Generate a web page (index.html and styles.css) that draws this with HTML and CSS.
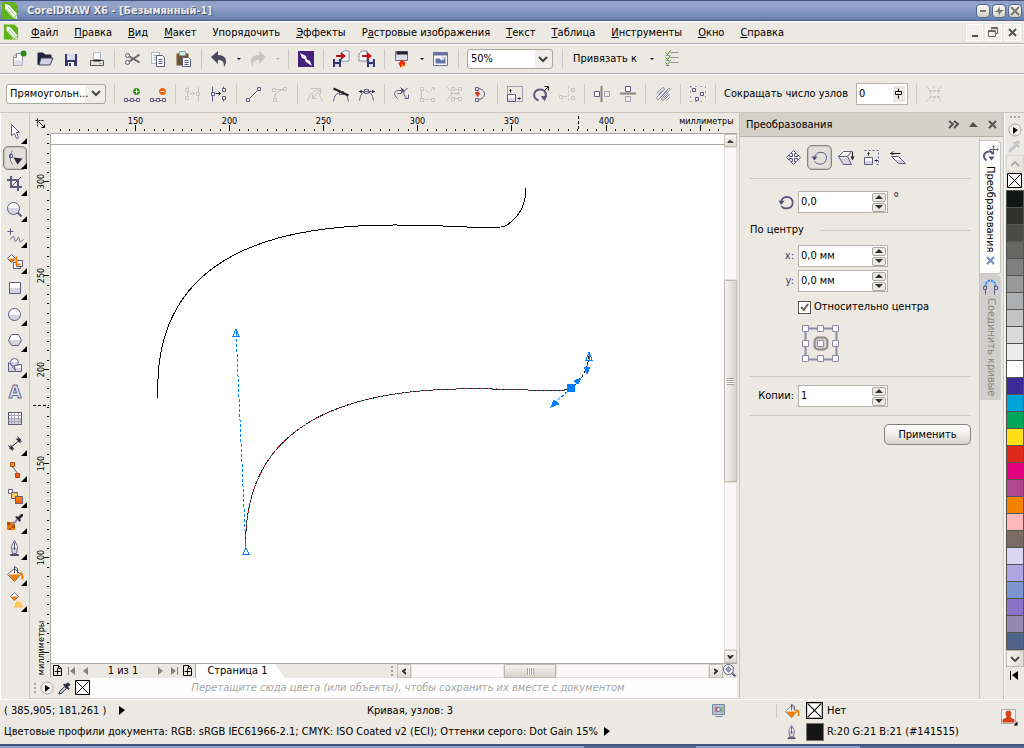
FILE: index.html
```html
<!DOCTYPE html>
<html lang="ru">

<head>
    <meta charset="UTF-8" />
    <meta name="viewport" content="width=device-width, initial-scale=1.0" />
    <title>CorelDRAW X6 - [Безымянный-1]</title>
    <link rel="stylesheet" href="styles.css">
</head>

<body>
    <!-- shared shapes -->
    <svg class="defs" width="0" height="0" aria-hidden="true">
        <defs>
            <linearGradient id="steel" x1="0" y1="0" x2="0" y2="1">
                <stop offset="0.5" stop-color="#fff" />
                <stop offset="0.5" stop-color="#d4d4e0" />
            </linearGradient>
            <linearGradient id="fire" x1="0" y1="0" x2="0" y2="1">
                <stop offset="0" stop-color="#ff9a00" />
                <stop offset="1" stop-color="#ff4800" />
            </linearGradient>
        </defs>
        <symbol id="logo" viewBox="0 0 18 18">
            <path d="M1 0h12l4 4v13H1z" fill="#5fb41c" />
            <path d="M4 2l4 1 8 9-4 4-8-9z" fill="#fff" />
            <path d="M7 5l7 8M5 7l7 8" stroke="#8cc65a" />
            <path d="M13 16l3-3v4z" fill="#e8f4dc" />
        </symbol>
        <symbol id="bucket" viewBox="-0.5 -0.5 18 18">
            <path d="M1 9l7-6 6 6-6 7z" fill="#fff" stroke="#6a6a8c" />
            <path d="M2 9h12l-6 7z" fill="#f08000" />
            <path d="M8 8V1l3 2v5" fill="none" stroke="#4c4c70" />
            <path d="M13 8c3-1 3 2 3 6" fill="none" stroke="#f08000" stroke-width="2" />
        </symbol>
        <symbol id="pen" viewBox="-0.5 -0.5 18 18">
            <path d="M8 1l3 6v2l-1 5H6L5 9V7z" fill="url(#steel)" stroke="#6a6a8c" />
            <path d="M8 3v7" stroke="#4c4c70" />
            <circle cx="8" cy="9" r="1" fill="#4c4c70" />
            <path d="M4 15h8v1H4z" fill="#4c4c70" stroke="#4c4c70" />
        </symbol>
        <symbol id="dropper" viewBox="0 0 14 14">
            <path d="M1 13l1-3 5-5 2 2-5 5z" fill="#b8d0d8" stroke="currentColor" />
            <path d="M6 3l5 5 1-1-2-2 3-2-2-2-2 1-1 1-1-1z" fill="currentColor" stroke="currentColor" />
        </symbol>
        <symbol id="none" viewBox="-0.5 -0.5 16 16">
            <path d="M0 0h14v14H0z" fill="#fff" stroke="#000" />
            <path d="M1 1l12 12M13 1L1 13" stroke="#000" />
        </symbol>
        <symbol id="play" viewBox="0 0 14 14">
            <circle cx="7" cy="7" r="6" fill="#f4f3ef" stroke="#a5a39c" />
            <path d="M5 4l5 3-5 4z" fill="#000" />
        </symbol>
        <symbol id="page-add" viewBox="-0.5 -0.5 10 12">
            <path d="M0 0h5l3 3v7H0zM5 0v3h3M4 3v6M1 6h6" fill="none" stroke="#000" />
        </symbol>
    </svg>

    <header class="title-bar">
        <svg width="18" height="18"><use href="#logo" /></svg>
        <h1>CorelDRAW X6 - [Безымянный-1]</h1>
        <div class="window-buttons">
            <button aria-label="Свернуть"><svg width="10" height="10"><path d="M2 4h6v2H2z" /></svg></button>
            <button aria-label="Восстановить"><svg width="10" height="10"><path d="M5 0l1 4h4L6 7v3L4 6H0l4-2z" /></svg></button>
            <button aria-label="Закрыть"><svg width="10" height="10"><path d="M1 1l8 8M9 1L1 9" stroke="#77776f" stroke-width="2" /></svg></button>
        </div>
    </header>

    <nav class="menu-bar">
        <svg width="16" height="17"><use href="#logo" /></svg>
        <a href="#"><u>Ф</u>айл</a>
        <a href="#"><u>П</u>равка</a>
        <a href="#"><u>В</u>ид</a>
        <a href="#"><u>М</u>акет</a>
        <a href="#">Упоря<u>д</u>очить</a>
        <a href="#"><u>Э</u>ффекты</a>
        <a href="#">Р<u>а</u>стровые изображения</a>
        <a href="#"><u>Т</u>екст</a>
        <a href="#"><u>Т</u>аблица</a>
        <a href="#"><u>И</u>нструменты</a>
        <a href="#"><u>О</u>кно</a>
        <a href="#"><u>С</u>правка</a>
        <div class="doc-buttons">
            <button aria-label="Свернуть документ"><svg width="11" height="11"><path d="M3 9h6" class="grey2" /></svg></button>
            <button aria-label="Восстановить документ"><svg width="11" height="11" viewBox="-0.5 -0.5 11 11"><path d="M3 2V0h6v6H7M0 3h7v6H0zM0 4h7M3 1h6" class="grey1" /></svg></button>
            <button aria-label="Закрыть документ"><svg width="11" height="11"><path d="M2 2l7 7M9 2L2 9" class="grey2" /></svg></button>
        </div>
    </nav>

    <div class="toolbar standard">
        <button class="tool" aria-label="Создать"><svg viewBox="-0.5 -0.5 18 18"><path d="M3 6l3-3h6v12H3zM3 7h3V3" fill="#f8f8fb" stroke="#9090a0" /><path d="M4 10h8v5H4z" fill="#dcdce8" /><circle cx="13" cy="3" r="3" fill="#2e8b12" /></svg></button>
        <button class="tool" aria-label="Открыть"><svg viewBox="0 0 18 18"><path d="M2 15V3h5l2 2h6v3" fill="#1e2438" stroke="#1e2438" /><path d="M3 15L5 8h12l-3 7z" fill="#cfd3e2" stroke="#3c4260" /></svg></button>
        <button class="tool" aria-label="Сохранить"><svg viewBox="0 0 18 18"><path d="M3 4h12v12H3z" fill="#34386e" /><path d="M5 4h8v6H5z" fill="#d8daea" /><path d="M6 12h6v4H6z" fill="#fff" /><path d="M7 13h2v3H7z" fill="#34386e" /></svg></button>
        <button class="tool" aria-label="Печать"><svg viewBox="-0.5 -0.5 18 18"><path d="M5 10V2h7v8" fill="#fff" stroke="#a0c4c8" /><path d="M2 10h13v5H2z" fill="#e4e4e4" stroke="#555" /><path d="M5 9h7v2H5z" fill="#222" /><path d="M11 13h2" stroke="#7a3" /></svg></button>
        <span class="sep"></span>
        <button class="tool" aria-label="Вырезать"><svg viewBox="-0.5 -0.5 18 18" class="ln"><circle cx="4" cy="5" r="2" /><circle cx="4" cy="12" r="2" /><path d="M6 6l10 6M6 11l10-7" stroke="#666" stroke-width="2" /></svg></button>
        <button class="tool" aria-label="Копировать"><svg viewBox="-0.5 -0.5 18 18"><path d="M2 2h8v11H2z" fill="#f2f8f6" stroke="#9cc0b8" /><path d="M4 5h5M4 7h4M4 9h4" stroke="#9cc0b8" /><path d="M7 5h6l2 2v9H7z" fill="#fff" stroke="#5a5a80" /><path d="M9 9h4M9 11h4M9 13h4" stroke="#5a5a80" /></svg></button>
        <button class="tool" aria-label="Вставить"><svg viewBox="-0.5 -0.5 18 18"><path d="M1 3h12v12H1z" fill="#6e5238" /><path d="M4 1h6v4H4z" fill="#d8e8e4" stroke="#88a8a0" /><path d="M7 7h6l2 2v7H7z" fill="#fff" stroke="#5a5a80" /><path d="M9 10h4M9 12h4M9 14h4" stroke="#5a5a80" /></svg></button>
        <span class="sep"></span>
        <button class="tool" aria-label="Отменить"><svg viewBox="0 0 18 18"><path d="M1 7l7-6v4c8 0 10 6 6 12 0-6-2-7-6-7v4z" fill="#4a4a5c" /></svg></button>
        <button class="drop" aria-label="Список отмены"></button>
        <button class="tool" aria-label="Вернуть"><svg viewBox="0 0 18 18"><path d="M17 7l-7-6v4C2 5 0 11 4 17c0-6 2-7 6-7v4z" fill="#c6c6c2" /></svg></button>
        <button class="drop off" aria-label="Список возврата"></button>
        <span class="sep"></span>
        <button class="tool" aria-label="Corel CONNECT"><svg viewBox="0 0 18 18"><path d="M1 1h16v16H1z" fill="#46207a" /><path d="M3 3l6 3 1 4-5-2zM15 16l-6-4-2-4 6 3zM4 11l5-3" fill="#fff" /></svg></button>
        <span class="sep"></span>
        <button class="tool" aria-label="Импорт"><svg viewBox="0 0 18 18"><path d="M9 3l3-2h5v10H9z" fill="#fff" stroke="#8888a4" /><path d="M1 9h8v8H1z" fill="#34386e" /><path d="M3 9h4v3H3zM3 14h4v3H3z" fill="#dde" /><path d="M4 5h5V2l5 4-5 4V7H4z" fill="#c81010" /></svg></button>
        <button class="tool" aria-label="Экспорт"><svg viewBox="0 0 18 18"><path d="M1 4l3-3h5v10H1z" fill="#fff" stroke="#8888a4" /><path d="M9 9h8v8H9z" fill="#34386e" /><path d="M11 9h4v3h-4zM11 14h4v3h-4z" fill="#dde" /><path d="M4 5h5V2l5 4-5 4V7H4z" fill="#c81010" /></svg></button>
        <span class="sep"></span>
        <button class="tool" aria-label="Запуск приложений"><svg viewBox="-0.5 -0.5 18 18"><path d="M2 1h12v9H2z" fill="#dcdce8" stroke="#6a6a8c" /><path d="M3 1h11v3H3z" fill="#20202c" /><path d="M8 9l4 3-1 4-2-1-2 2-2-4z" fill="#f02808" /><path d="M8 13l2 2-1 2z" fill="#ffc800" /></svg></button>
        <button class="drop" aria-label="Список приложений"></button>
        <button class="tool" aria-label="Экран приветствия"><svg viewBox="-0.5 -0.5 18 18"><path d="M1 2h14v13H1z" fill="#fff" stroke="#6a70a0" /><path d="M1 2h14v3H1z" fill="#6a70a0" /><path d="M3 8h4l2 2 4-4v7H3z" fill="#6470a8" /><path d="M8 7l3-2 2 1-2 4z" fill="#d4dcec" /></svg></button>
        <span class="sep"></span>
        <select class="zoom" aria-label="Масштаб"><option>50%</option></select>
        <span class="sep"></span>
        <button class="snap">Привязать к</button>
        <button class="drop" aria-label="Параметры привязки"></button>
        <button class="tool" aria-label="Параметры"><svg viewBox="-0.5 -0.5 18 18"><path d="M8 2h8M8 7h8M8 12h8" stroke="#909098" /><path d="M3 2l2 2 3-4M3 7l2 2 3-4M3 12l2 2 3-4" fill="none" stroke="#3c9a20" /><path d="M3 5h4M3 10h4M3 15h4" stroke="#909098" /></svg></button>
    </div>

    <div class="toolbar property">
        <select class="mode" aria-label="Режим выбора"><option>Прямоугольн...</option></select>
        <span class="sep"></span>
        <button class="tool" aria-label="Добавить узел"><svg viewBox="-0.5 -0.5 18 18" class="ln"><path d="M1 13h3v3H1zM7 13h3v3H7zM13 13h3v3h-3zM4 15h3M10 15h3" /><circle cx="13" cy="6" r="3" fill="#2e8b12" stroke="#2e8b12" /><path d="M13 4v4M11 6h4" stroke="#fff" /></svg></button>
        <button class="tool" aria-label="Удалить узел"><svg viewBox="-0.5 -0.5 18 18" class="ln"><path d="M1 13h3v3H1zM7 13h3v3H7zM13 13h3v3h-3zM4 15h3M10 15h3" /><circle cx="13" cy="6" r="3" fill="#f05a00" stroke="#f05a00" /><path d="M11 6h4" stroke="#fff" /></svg></button>
        <span class="sep"></span>
        <button class="tool" aria-label="Соединить узлы" disabled><svg viewBox="-0.5 -0.5 18 18" class="ln"><path d="M3 1v2M1 3h3v3H1zM3 6v5M1 11h3v3H1zM5 8h5M8 6l2 2-2 2M14 1v6M12 7h3v3h-3zM14 10v6" /></svg></button>
        <button class="tool" aria-label="Разъединить кривую"><svg viewBox="-0.5 -0.5 18 18" class="ln"><path d="M2 1v6M1 7h3v3H1zM2 10v6M13 1v2M12 3h3v3h-3zM12 11h3v3h-3zM13 14v2" /><path d="M5 8h5M8 6l2 2-2 2" stroke="#222" /></svg></button>
        <span class="sep"></span>
        <button class="tool" aria-label="В линию"><svg viewBox="-0.5 -0.5 18 18" class="ln"><path d="M1 13h3v3H1zM12 2h3v3h-3zM4 13l8-8" /></svg></button>
        <button class="tool" aria-label="В кривую" disabled><svg viewBox="-0.5 -0.5 18 18" class="ln"><path d="M1 3h3v3H1zM4 4h8M12 2h3v3h-3zM2 13h3v3H2zM3 13c0-5 4-8 9-9M4 8v3" /></svg></button>
        <span class="sep"></span>
        <button class="tool" aria-label="Острый узел" disabled><svg viewBox="-0.5 -0.5 18 18" class="ln"><path d="M1 16c1-6 5-10 11-12M4 3h10v6M6 13l8-9M6 9v4h4M12 7l4 9" /></svg></button>
        <button class="tool" aria-label="Сглаженный узел"><svg viewBox="-0.5 -0.5 18 18" class="ln"><path d="M1 16c1-6 3-9 8-9s6 4 7 9M7 6h4v3H7z" /><path d="M1 3l15 7" stroke="#222" stroke-width="2" /></svg></button>
        <button class="tool" aria-label="Симметричный узел"><svg viewBox="-0.5 -0.5 18 18" class="ln"><path d="M1 15c1-6 3-9 7-9s6 3 7 9M6 4h4v4H6zM1 6h15" /><path d="M1 6l2-1v2zM16 6l-2-1v2z" stroke="#222" /></svg></button>
        <span class="sep"></span>
        <button class="tool" aria-label="Сменить направление"><svg viewBox="-0.5 -0.5 18 18" class="ln"><path d="M4 13c-4-3-4-8 1-8h5M7 2l3 3-3 3M14 3c-5 2-5 7 0 10M15 9v4h-4M4 8h4" /><path d="M8 3l3 2-3 2z" fill="#50507a" /></svg></button>
        <button class="tool" aria-label="Продлить кривую" disabled><svg viewBox="-0.5 -0.5 18 18" class="ln"><path d="M1 2h3v3H1zM2 5v8M1 13h3v3H1zM4 14h8M12 13h3v3h-3z" /><path d="M6 4l3 3M10 6l5-4M12 2h3v3" /></svg></button>
        <button class="tool" aria-label="Извлечь фрагмент" disabled><svg viewBox="-0.5 -0.5 18 18" class="ln"><path d="M1 1l6 7-6 7M6 2h3v3H6zM13 2h3v3h-3zM6 12h3v3H6zM13 12h3v3h-3zM5 8h9M12 6l2 2-2 2M9 4h4M9 13h4" /></svg></button>
        <button class="tool" aria-label="Замкнуть кривую"><svg viewBox="-0.5 -0.5 18 18" class="ln"><path d="M4 2h3v3H4zM4 13h3v3H4zM7 3c8 1 8 10 0 11" /><path d="M6 11V8M4 8l2-1 1 1z" stroke="#e02808" fill="#e02808" stroke-width="2" /></svg></button>
        <span class="sep"></span>
        <button class="tool" aria-label="Растянуть узлы"><svg viewBox="-0.5 -0.5 18 18" class="ln"><path d="M1 9h8v7H1z" fill="url(#steel)" /><path d="M1 1h15v15H9M1 1v8" stroke-dasharray="1 1" /><path d="M4 7V4M3 5l1-1 1 1M11 13h3M13 12l1 1-1 1" stroke="#222" /></svg></button>
        <button class="tool" aria-label="Повернуть узлы"><svg viewBox="-0.5 -0.5 18 18" class="ln"><path d="M6 15c-7-3-5-11 2-11 5 0 7 5 4 9" stroke-width="2" /><path d="M9 11l3 4 2-4z" fill="#50507a" /><path d="M12 5l4-4M12 1h4v4" stroke="#222" /></svg></button>
        <button class="tool" aria-label="Выровнять узлы" disabled><svg viewBox="-0.5 -0.5 18 18" class="ln"><path d="M10 1v15" stroke-dasharray="2 2" /><path d="M1 10h3v3H1zM13 3h3v3h-3zM13 11h3v3h-3zM5 11h4" /></svg></button>
        <span class="sep"></span>
        <button class="tool" aria-label="Отразить по горизонтали"><svg viewBox="-0.5 -0.5 18 18" class="ln"><path d="M1 6h5v5H1z" fill="#fff" /><path d="M11 6h5v5h-5z" stroke-dasharray="1 1" /><path d="M8 1v16" stroke="#222" stroke-width="2" stroke-dasharray="1 1" /></svg></button>
        <button class="tool" aria-label="Отразить по вертикали"><svg viewBox="-0.5 -0.5 18 18" class="ln"><path d="M6 1h5v5H6z" fill="#fff" /><path d="M6 11h5v5H6z" stroke-dasharray="1 1" /><path d="M1 8h16" stroke="#222" stroke-width="2" stroke-dasharray="1 1" /></svg></button>
        <span class="sep"></span>
        <button class="tool" aria-label="Эластичный режим"><svg viewBox="-0.5 -0.5 18 18" class="ln"><path d="M2 8l5-5c2-2 4 0 2 2l-6 6c-2 2 0 4 2 2L13 4c2-2 3 0 2 1l-7 7c-2 2 0 4 2 2l5-5M12 15l3-3M4 9l4-4M6 12l7-7M9 13l5-5" opacity="0.7" /></svg></button>
        <span class="sep"></span>
        <button class="tool" aria-label="Выбрать все узлы"><svg viewBox="-0.5 -0.5 18 18" class="ln"><path d="M3 3h3v3H3zM11 7h3v3h-3zM6 12h3v3H6z" /><path d="M1 1h15M1 16h15" stroke-dasharray="1 4" /><path d="M1 1v15M16 1v15" stroke-dasharray="1 4" /></svg></button>
        <span class="sep"></span>
        <label for="reduce">Сокращать число узлов</label>
        <span class="field reduce">
            <input id="reduce" type="text" value="0">
            <button aria-label="Ползунок"><svg width="8" height="11" viewBox="-0.5 -0.5 8 11"><path d="M3 0v3M3 7v3M0 3h6v3H0z" fill="none" stroke="#000" /></svg></button>
        </span>
        <span class="sep"></span>
        <button class="tool" aria-label="Ограничивающая рамка" disabled><svg viewBox="-0.5 -0.5 18 18" class="ln"><path d="M1 1l3 3M16 1l-3 3M1 16l3-3M16 16l-3-3M4 5h2v1H4zM8 5h2v1H8zM12 5h2v1h-2zM4 11h2v1H4zM8 11h2v1H8zM12 11h2v1h-2zM4 8h2M12 8h2M8 1v2M8 14v2" /></svg></button>
    </div>

    <main>
        <aside class="toolbox">
            <button class="fly" aria-label="Указатель"><svg viewBox="-0.5 -0.5 18 18" class="ln"><path d="M5 1v11l3-2 2 5 2-1-2-5h3z" fill="#fff" /></svg></button>
            <button class="fly active" aria-label="Форма"><svg viewBox="-0.5 -0.5 18 18" class="ln"><path d="M6 1c-3 5-3 9 0 14M3 5h3v3H3z" fill="#fff" /><path d="M7 8l9 1-5 6z" fill="#2a2a3a" stroke="none" /></svg></button>
            <button class="fly" aria-label="Обрезка"><svg viewBox="0 0 18 18" class="ln"><path d="M5 1v11h11M1 5h11v11" stroke-width="2" /><path d="M5 12L15 2" /></svg></button>
            <button class="fly" aria-label="Масштаб"><svg viewBox="-0.5 -0.5 18 18" class="ln"><circle cx="7" cy="7" r="6" fill="url(#steel)" /><path d="M11 11l4 4" stroke-width="2" /></svg></button>
            <button class="fly" aria-label="Свободная форма"><svg viewBox="-0.5 -0.5 18 18" class="ln"><path d="M4 1v6M1 4h6M4 12c3-5 4-3 4 0s2 2 3-1 2 0 2 2 2 1 4-1" /></svg></button>
            <button class="fly" aria-label="Интеллектуальная заливка"><svg viewBox="-0.5 -0.5 18 18" class="ln"><path d="M1 5l4-4 4 4-4 4z" fill="#fff" /><path d="M2 5h7l-4 4z" fill="#f08000" stroke="none" /><path d="M7 9h7v6H7z" fill="#fff" /><path d="M10 7h6v6h-6z" fill="#fff" /><path d="M10 3v8h4" stroke="#f08000" stroke-width="2" /></svg></button>
            <button class="fly" aria-label="Прямоугольник"><svg viewBox="-0.5 -0.5 18 18" class="ln"><path d="M3 3h11v11H3z" fill="url(#steel)" /></svg></button>
            <button class="fly" aria-label="Эллипс"><svg viewBox="-0.5 -0.5 18 18" class="ln"><circle cx="8" cy="9" r="6" fill="url(#steel)" /></svg></button>
            <button class="fly" aria-label="Многоугольник"><svg viewBox="-0.5 -0.5 18 18" class="ln"><path d="M5 3h7l3 6-3 5H5L2 9z" fill="url(#steel)" /></svg></button>
            <button class="fly" aria-label="Основные фигуры"><svg viewBox="-0.5 -0.5 18 18" class="ln"><path d="M2 5l8 9H2z" fill="url(#steel)" /><circle cx="8" cy="5" r="4" fill="url(#steel)" /><path d="M8 8l7-1v7H9z" fill="url(#steel)" /></svg></button>
            <button aria-label="Текст"><span class="letter">A</span></button>
            <button aria-label="Таблица"><svg viewBox="-0.5 -0.5 18 18" class="ln"><path d="M2 3h13v12H2z" fill="url(#steel)" /><path d="M2 6h13M2 9h13M2 12h13M5 3v12M8 3v12M12 3v12" stroke="#a4a4b8" /><path d="M2 3h13v12H2z" /></svg></button>
            <button class="fly" aria-label="Размер"><svg viewBox="-0.5 -0.5 18 18" class="ln"><path d="M3 13L14 4M2 10l4 5M11 1l4 5" stroke="#2a2a3a" /><path d="M4 9v5h4zM9 3h5v5z" fill="#2a2a3a" stroke="none" /></svg></button>
            <button class="fly" aria-label="Соединитель"><svg viewBox="-0.5 -0.5 18 18" class="ln"><path d="M5 4l7 9" /><path d="M4 1h4v4H4zM9 12h4v4H9z" fill="url(#fire)" stroke="#b04a10" /></svg></button>
            <button class="fly" aria-label="Перетекание"><svg viewBox="-0.5 -0.5 18 18" class="ln"><path d="M2 2h4v4H2z" fill="#fff" /><path d="M5 5h6v6H5z" fill="#fdc860" /><path d="M9 9h7v7H9z" fill="url(#fire)" /></svg></button>
            <button class="fly" aria-label="Пипетка"><svg viewBox="0 0 18 18"><path d="M1 9h8v8H1z" fill="#f07800" /><path d="M1 9h3v3H1zM6 12h3v3H6zM3 15h2v2H3z" fill="#b04a00" /><path d="M6 12l6-6" stroke="#8c8ca8" stroke-width="2" /><path d="M9 4l5 5 1-2-1-1 3-3V1h-2l-3 3-1-1z" fill="#2a2a3a" /></svg></button>
            <button class="fly" aria-label="Контур"><svg viewBox="0 0 18 18"><use href="#pen" /></svg></button>
            <button class="fly" aria-label="Заливка"><svg viewBox="0 0 18 18"><use href="#bucket" /></svg></button>
            <button class="fly" aria-label="Интерактивная заливка"><svg viewBox="-0.5 -0.5 18 18"><path d="M4 5l4-4 4 4-4 4z" fill="#fff" stroke="#6a6a8c" /><path d="M5 5h7L8 9z" fill="#f08000" /><path d="M10 10h4l3 6H7z" fill="#fcc858" /></svg></button>
        </aside>

        <section class="workspace">
            <div class="corner"><svg width="14" height="14" viewBox="-0.5 -0.5 14 14"><path d="M1 3h9M3 1v9" stroke="#000" stroke-dasharray="2 1" /><path d="M4 4l6 6M10 7v3H7" fill="none" stroke="#000" /></svg></div>
            <svg class="ruler-x" id="rulerX"></svg>
            <svg class="ruler-y" id="rulerY"></svg>

            <svg class="canvas">
                <path d="M0 10.500H2000" stroke="#a9a9a1" />
                <g fill="none" stroke="#000">
                    <path d="M107 264C97 28 438 108 456 91C468 83 475 71 475 54" />
                    <path d="M195 418C185 198 503 270 520 254" stroke="#222" />
                    <path d="M195 418C185 198 503 270 520 254C530 247 538 235 538 219" stroke="#d02030" stroke-dasharray="2 6" />
                    <path d="M195 418C185 198 503 270 520 254C530 247 538 235 538 219" stroke="#50b090" stroke-dasharray="1 7" stroke-dashoffset="4" />
                    <path d="M520 254C530 247 538 235 538 219" stroke-dasharray="3 2" />
                </g>
                <g fill="none" stroke="#0080ff">
                    <path d="M195 418L185 198M520 254L503 270" stroke-dasharray="3 2" />
                    <path d="M195 414l-3 6h6z" fill="#fff" />
                    <path d="M185 195l-3 7h6zM185 196v6M538 218l-3 8h6zM538 219v7" />
                    <path d="M500 273l3-7 5 4zM530 244l-3 6-4-3zM536 240l-3-7h6z" fill="#0080ff" />
                    <path d="M516 250h8v8h-8z" fill="#0080ff" stroke="none" />
                </g>
            </svg>

            <div class="scroll vertical">
                <button aria-label="Вверх"><svg width="7" height="4"><path d="M1 4l2-2 3 2" /></svg></button>
                <span class="track before"></span>
                <span class="thumb"></span>
                <span class="track after"></span>
                <button aria-label="Вниз"><svg width="7" height="4"><path d="M1 0l2 3 3-3" /></svg></button>
            </div>

            <div class="page-row">
                <div class="pages">
                    <button aria-label="Добавить страницу в начало"><svg width="10" height="12"><use href="#page-add" /></svg></button>
                    <button aria-label="Первая страница"><svg width="8" height="8"><path d="M0 0h1v8H0zM7 0v8L2 4z" /></svg></button>
                    <button aria-label="Предыдущая"><svg width="8" height="8"><path d="M6 0v8L1 4z" /></svg></button>
                    <span class="count">1 из 1</span>
                    <button aria-label="Следующая"><svg width="8" height="8"><path d="M2 0v8l5-4z" /></svg></button>
                    <button aria-label="Последняя страница"><svg width="8" height="8"><path d="M7 0h1v8H7zM1 0v8l5-4z" /></svg></button>
                    <button aria-label="Добавить страницу в конец"><svg width="10" height="12"><use href="#page-add" /></svg></button>
                    <button class="page-tab">Страница 1</button>
                    <span class="grip"></span>
                </div>
                <div class="scroll horizontal">
                    <button aria-label="Влево"><svg width="4" height="7"><path d="M4 1L1 3l3 3" /></svg></button>
                    <span class="track before"></span>
                    <span class="thumb"></span>
                    <span class="track after"></span>
                    <button aria-label="Вправо"><svg width="4" height="7"><path d="M0 1l3 2-3 3" /></svg></button>
                </div>
                <button class="navigator" aria-label="Навигатор"><svg width="14" height="14" viewBox="-0.5 -0.5 14 14" class="ln"><circle cx="5" cy="5" r="5" fill="#fff" /><circle cx="5" cy="5" r="2" /><path d="M5 1v8M1 5h8" opacity="0.5" /><path d="M9 9l3 3" stroke-width="2" /></svg></button>
            </div>

            <div class="doc-palette">
                <span class="grip"></span>
                <button aria-label="Меню палитры"><svg width="14" height="14"><use href="#play" /></svg></button>
                <button class="dark" aria-label="Пипетка цвета"><svg width="13" height="13"><use href="#dropper" /></svg></button>
                <button aria-label="Нет цвета"><svg width="16" height="16"><use href="#none" /></svg></button>
                <p>Перетащите сюда цвета (или объекты), чтобы сохранить их вместе с документом</p>
            </div>
        </section>

        <section class="docker">
            <header>
                <h2>Преобразования</h2>
                <button aria-label="Свернуть панель"><svg width="11" height="9"><path d="M1 1l4 3-4 4M6 1l4 3-4 4" class="grey2" /></svg></button>
                <button aria-label="Скрыть"><svg width="11" height="9"><path d="M1 7l4-5 5 5z" fill="#555550" /></svg></button>
                <button aria-label="Закрыть панель"><svg width="9" height="9"><path d="M1 1l7 7M8 1L1 8" class="grey2" /></svg></button>
            </header>
            <form class="panel">
                <div class="modes">
                    <button type="button" aria-label="Положение"><svg viewBox="-0.5 -0.5 18 18" class="ln"><path d="M7 7V4H5l3-3 3 3H9v3h3V5l3 3-3 3V9H9v3h2l-3 3-3-3h2V9H4v2L1 8l3-3v2z" fill="#fff" /></svg></button>
                    <button type="button" class="active" aria-label="Поворот"><svg viewBox="-0.5 -0.5 18 18" class="ln"><path d="M3 8c1-7 12-7 12 0 0 8-9 8-12 4" /><path d="M0 7h6l-3 4z" fill="#50507a" stroke="none" /></svg></button>
                    <button type="button" aria-label="Масштаб и отражение"><svg viewBox="-0.5 -0.5 18 18" class="ln"><path d="M1 7l5-5h8l-4 5zM1 7h9l4 8H6z" fill="url(#steel)" /><path d="M15 2v6" stroke="#222" /><path d="M13 7h4l-2 4z" fill="#222" stroke="none" /></svg></button>
                    <button type="button" aria-label="Размер"><svg viewBox="-0.5 -0.5 18 18" class="ln"><path d="M1 8h8v7H1z" fill="url(#steel)" /><path d="M1 1h14v14h-4" stroke-dasharray="2 2" /><path d="M5 6V3M4 4l1-1 1 1M11 11h3M13 10l1 1-1 1" stroke="#222" /></svg></button>
                    <button type="button" aria-label="Наклон"><svg viewBox="-0.5 -0.5 18 18" class="ln"><path d="M2 7h7l7 7H9z" fill="url(#steel)" /><path d="M1 4h10M4 2L1 4l3 1" stroke="#222" /></svg></button>
                </div>
                <hr>
                <div class="row first">
                    <label for="angle" aria-label="Угол поворота"><svg width="16" height="16" viewBox="-0.5 -0.5 18 18" class="ln"><path d="M3 8c1-7 13-7 13 1 0 8-10 8-13 4" stroke-width="2" /><path d="M0 7h7l-4 5z" fill="#50507a" stroke="none" /></svg></label>
                    <span class="field spin">
                        <input id="angle" type="text" value="0,0">
                        <span class="steps"><button type="button" aria-label="Больше"></button><button type="button" class="down" aria-label="Меньше"></button></span>
                    </span>
                    <span class="degree">°</span>
                </div>
                <div class="group"><span>По центру</span><hr></div>
                <div class="row">
                    <label class="axis" for="cx">x:</label>
                    <span class="field spin">
                        <input id="cx" type="text" value="0,0 мм">
                        <span class="steps"><button type="button" aria-label="Больше"></button><button type="button" class="down" aria-label="Меньше"></button></span>
                    </span>
                </div>
                <div class="row">
                    <label class="axis" for="cy">y:</label>
                    <span class="field spin">
                        <input id="cy" type="text" value="0,0 мм">
                        <span class="steps"><button type="button" aria-label="Больше"></button><button type="button" class="down" aria-label="Меньше"></button></span>
                    </span>
                </div>
                <div class="check">
                    <input id="relative" type="checkbox" checked>
                    <label for="relative">Относительно центра</label>
                </div>
                <button type="button" class="anchor" aria-label="Точка привязки">
                    <svg width="40" height="40" viewBox="-0.5 -0.5 40 40">
                        <path d="M4 4h31v31H4z" fill="none" stroke="#8c8ca8" stroke-width="2" />
                        <rect x="13" y="13" width="13" height="12" rx="4" fill="#d0cfcb" stroke="#8a8a82" stroke-width="2" />
                        <g fill="#f8f8fc" stroke="#8c8ca8">
                            <path d="M1 1h6v6H1zM16 1h6v6h-6zM31 1h6v6h-6zM1 16h6v6H1zM16 16h6v6h-6zM31 16h6v6h-6zM1 31h6v6H1zM16 31h6v6h-6zM31 31h6v6h-6z" />
                        </g>
                    </svg>
                </button>
                <hr>
                <div class="row copies">
                    <label for="copies">Копии:</label>
                    <span class="field spin">
                        <input id="copies" type="text" value="1">
                        <span class="steps"><button type="button" aria-label="Больше"></button><button type="button" class="down" aria-label="Меньше"></button></span>
                    </span>
                </div>
                <hr>
                <button type="button" class="apply">Применить</button>
            </form>
            <div class="docker-tabs">
                <button class="current">
                    <svg width="17" height="17" viewBox="-0.5 -0.5 17 17" class="ln"><path d="M4 15c-5-4-2-9 3-9 2 0 3 1 3 3" stroke-width="2" /><path d="M6 11h6l-3 4z" fill="#50507a" stroke="none" /><path d="M11 0v9M7 4h9M10 1h2M10 8h2M8 3v2M15 3v2" /></svg>
                    <span>Преобразования</span>
                    <svg width="9" height="9"><path d="M1 1l7 7M8 1L1 8" stroke="#6f8cba" stroke-width="2" /></svg>
                </button>
                <button>
                    <svg width="17" height="17" viewBox="-0.5 -0.5 17 17" class="ln"><path d="M3 8c0-8 10-8 10 0" stroke="#1e8cff" stroke-width="2" stroke-dasharray="2 1" /><path d="M1 8h3v3H1zM12 8h3v3h-3zM3 11v5M12 11v5" /></svg>
                    <span>Соединить кривые</span>
                </button>
            </div>
        </section>

        <aside class="palette">
            <span class="dots"></span>
            <button aria-label="Меню"><svg width="14" height="14"><use href="#play" /></svg></button>
            <button class="faded" aria-label="Пипетка"><svg width="13" height="13"><use href="#dropper" /></svg></button>
            <button class="step off" aria-label="Прокрутить вверх"><svg width="10" height="6"><path d="M1 5l4-4 4 4" class="grey2" /></svg></button>
            <button class="none" aria-label="Нет цвета"><svg width="16" height="16"><use href="#none" /></svg></button>
            <div class="swatches" id="swatches"></div>
            <button class="step" aria-label="Прокрутить вниз"><svg width="10" height="6"><path d="M1 1l4 4 4-4" class="grey2" /></svg></button>
            <button aria-label="Развернуть палитру"><svg width="9" height="9"><path d="M0 0h1v9H0zM8 0v9L2 4z" /></svg></button>
        </aside>
    </main>

    <footer class="status">
        <div class="info">
            <p class="line">
                <span class="coords">( 385,905; 181,261 ) <svg width="6" height="9"><path d="M0 0l6 4-6 5z" /></svg></span>
                <span>Кривая, узлов: 3</span>
                <svg class="monitor" width="15" height="15" viewBox="-0.5 -0.5 15 15"><path d="M1 1h12v10H1z" fill="#b4c8e0" stroke="#7888a8" /><path d="M3 3h3v6H3z" fill="#d87878" /><path d="M9 3h3v6H9z" fill="#7cb880" /><circle cx="7" cy="6" r="2" fill="#eee" stroke="#66667a" /><path d="M4 13h7" stroke="#7888a8" /></svg>
            </p>
            <p class="line">Цветовые профили документа: RGB: sRGB IEC61966-2.1; CMYK: ISO Coated v2 (ECI); Оттенки серого: Dot Gain 15% <svg width="6" height="9"><path d="M0 0l6 4-6 5z" /></svg></p>
        </div>
        <div class="colors">
            <p class="line"><svg width="16" height="16"><use href="#bucket" /></svg><svg width="18" height="18"><use href="#none" /></svg>Нет</p>
            <p class="line"><svg width="16" height="16"><use href="#pen" /></svg><span class="outline"></span>R:20 G:21 B:21 (#141515)</p>
        </div>
        <button class="user" aria-label="Вход"><svg width="18" height="18" viewBox="-0.5 -0.5 18 18"><path d="M1 1h14v14H1z" fill="#f6f4f2" stroke="#aaa" /><path d="M5 5c0-4 6-4 6 0l-1 4 4 2v3H2v-3l4-2z" fill="#d84018" /><path d="M17 13v4h-4z" fill="#000" /></svg></button>
    </footer>
    <div class="taskbar"></div>

    <script>
        const colors = [
            "#141515", "#31312f", "#4b4b4a", "#666664", "#808080", "#989898", "#adafb1",
            "#c3c4c3", "#d9dad9", "#ececec", "#ffffff", "#3c2a96", "#00a3d9", "#00a65a",
            "#fde018", "#de2a18", "#e3007f", "#ad4891", "#f28300", "#ffb9bd", "#7a6c64",
            "#dad5f3", "#afa5e1", "#7b95d0", "#8a72c6", "#9489b4", "#50638a",
        ];

        function loadSwatches() {
            const swatches = document.getElementById("swatches");
            colors.forEach((color) => {
                const button = document.createElement("button");
                button.style.backgroundColor = color;
                button.setAttribute("aria-label", color);
                swatches.appendChild(button);
            });
        }

        // one tick is 5 mm, a label every ten ticks
        const tick = 9.41;

        function drawRulerX() {
            let out = "";
            for (let i = -8; i < 63; i++) {
                const x = Math.round(84 + i * tick) + 0.5;
                const top = i % 10 === 0 ? 12 : 16;
                out += `<path d="M${x} ${top}V18" />`;
                if (i % 10 === 0 && i <= 50) {
                    out += `<text x="${x}" y="11">${150 + i * 5}</text>`;
                }
            }
            out += '<path d="M527.5 3V18" stroke-dasharray="3 2" />';
            out += '<text class="unit" x="99.5%" y="11">миллиметры</text>';
            document.getElementById("rulerX").innerHTML = out;
        }

        function drawRulerY() {
            let out = "";
            for (let i = -5; i < 52; i++) {
                const y = Math.round(47 + i * tick) + 0.5;
                const left = i % 10 === 0 ? 14 : 17;
                out += `<path d="M${left} ${y}H19" />`;
                if (i % 10 === 0 && i <= 40) {
                    out += `<text transform="translate(14 ${y}) rotate(-90)">${300 - i * 5}</text>`;
                }
            }
            out += '<path d="M3 271.5H19" stroke-dasharray="3 2" />';
            out += '<text transform="translate(14 514) rotate(-90)">миллиметры</text>';
            document.getElementById("rulerY").innerHTML = out;
        }

        loadSwatches();
        drawRulerX();
        drawRulerY();
    </script>
</body>

</html>
```
FILE: styles.css
```css
* {
    box-sizing: border-box;
}

body {
    font-family: "DejaVu Sans Condensed", "DejaVu Sans", Tahoma, sans-serif;
    font-size: 11px;
    line-height: 14px;
    color: #000;
    display: flex;
    flex-direction: column;
    height: 100vh;
    margin: 0;
    background-color: #ece9e2;
    overflow: hidden;
}

.defs {
    position: absolute;
}

button,
input,
select {
    font: inherit;
    color: inherit;
    margin: 0;
    padding: 0;
    border: none;
    background: none;
    outline: none;
}

button {
    display: flex;
    align-items: center;
    justify-content: center;
    flex: none;
}

h1,
h2,
p {
    margin: 0;
    font-size: 11px;
    font-weight: normal;
    white-space: nowrap;
}

svg {
    flex: none;
    display: block;
}

.ln {
    fill: none;
    stroke: #5c5c84;
}

button:disabled .ln {
    stroke: #c6c4be;
}

.grey1 {
    fill: none;
    stroke: #66665f;
}

.grey2 {
    fill: none;
    stroke: #55554f;
    stroke-width: 2;
}

/* title and menu */

.title-bar {
    display: flex;
    align-items: center;
    height: 21px;
    padding: 0 2px 0 1px;
    border-top: 1px solid #44557c;
    border-bottom: 1px solid #4a5f8c;
    background: linear-gradient(#8f9fc8, #94a4ca 30%, #6580ac);
    flex: none;
}

.title-bar h1 {
    margin-left: 8px;
    font-weight: bold;
    color: #ece9e2;
    text-shadow: 1px 1px 0 #44557c;
}

.window-buttons {
    display: flex;
    gap: 2px;
    margin-left: auto;
}

.window-buttons button {
    width: 14px;
    height: 14px;
    border: 1px solid #56648a;
    border-radius: 4px;
    background: linear-gradient(#fff, #d4d0c8);
}

.window-buttons svg {
    fill: #77776f;
}

.menu-bar {
    display: flex;
    align-items: center;
    gap: 16px;
    height: 24px;
    padding: 0 3px;
    border-top: 1px solid #fff;
    border-bottom: 2px groove #fff;
    flex: none;
}

.menu-bar > svg {
    margin-right: -4px;
}

.menu-bar a {
    color: #000;
    text-decoration: none;
    white-space: nowrap;
}

.doc-buttons {
    display: flex;
    gap: 2px;
    margin-left: auto;
}

.doc-buttons button {
    width: 17px;
    height: 17px;
    border: 1px solid #fff;
    background-color: #f3f1ed;
}

/* toolbars */

.toolbar {
    display: flex;
    align-items: center;
    padding: 0 6px;
    border-bottom: 2px groove #fff;
    flex: none;
}

.standard {
    height: 30px;
}

.property {
    height: 38px;
    border-bottom: 1px solid #c9c6be;
}

.sep {
    width: 1px;
    height: 20px;
    margin: 0 4px;
    background-color: #ccc9c1;
    flex: none;
}

.tool {
    width: 26px;
    height: 24px;
}

.tool svg,
.toolbox svg,
.modes svg {
    width: 18px;
    height: 18px;
}

.drop {
    width: 13px;
    height: 20px;
}

.drop::before {
    content: "";
    border: 2px solid transparent;
    border-top-color: #000;
    border-bottom: none;
}

.drop.off::before {
    border-top-color: #b8b5ad;
}

.toolbar select {
    appearance: none;
    height: 20px;
    padding: 0 20px 0 3px;
    border: 1px solid #aaa79f;
    border-radius: 3px;
    background: url("data:image/svg+xml,%3Csvg xmlns='http://www.w3.org/2000/svg' width='10' height='7'%3E%3Cpath d='M1 1l4 4 4-4' fill='none' stroke='%23444' stroke-width='2'/%3E%3C/svg%3E") no-repeat right 4px center, linear-gradient(90deg, #fff 80%, #f0eee9 80%);
}

.toolbar .zoom {
    width: 86px;
    margin: 0 5px 0 4px;
}

.toolbar .mode {
    width: 100px;
    margin-right: 4px;
    padding-right: 0;
}

.snap {
    padding: 0 8px 0 6px;
    white-space: nowrap;
}

.property label {
    margin: 0 8px 0 4px;
    white-space: nowrap;
}

.field {
    display: flex;
    align-items: center;
    height: 22px;
    border: 1px solid #b5b3ac;
    background-color: #fff;
}

.field input {
    flex: 1;
    min-width: 0;
    padding: 0 2px;
}

.field button {
    background-color: #ece9e2;
}

.reduce {
    width: 52px;
    margin-right: 4px;
}

.reduce button {
    width: 12px;
    height: 16px;
    margin-right: 2px;
}

/* main area */

main {
    display: grid;
    grid-template-columns: 30px 1fr 264px 20px;
    flex: 1;
    min-height: 0;
}

.toolbox {
    display: flex;
    flex-direction: column;
    padding: 6px 2px 0 2px;
    border-right: 1px solid #c9c6be;
    border-left: 1px solid #fff;
}

.toolbox button {
    position: relative;
    width: 24px;
    height: 26px;
    border: 1px solid transparent;
    border-radius: 5px;
}

.toolbox .active,
.modes .active {
    border-color: #85837b;
    background-color: #e2e0da;
    box-shadow: inset 0 0 2px #85837b;
}

.toolbox .active {
    height: 24px;
    margin: 1px 0;
}

.fly::after {
    content: "";
    position: absolute;
    right: -1px;
    bottom: 0;
    border: 3px solid #000;
    border-top-color: transparent;
    border-left-color: transparent;
}

.letter {
    font-size: 18px;
    line-height: 24px;
    font-weight: bold;
    color: #e8e8f0;
    -webkit-text-stroke: 1px #6a6a8c;
}

.workspace {
    display: grid;
    grid-template-columns: 21px 1fr 13px;
    grid-template-rows: 21px 1fr 15px 21px;
    min-width: 0;
    padding-right: 2px;
    border-right: 1px solid #c9c6be;
}

.corner {
    display: grid;
    place-items: center;
}

.ruler-x,
.ruler-y {
    width: 100%;
    height: 100%;
    font-size: 9px;
    stroke: #000;
}

.ruler-x {
    grid-column: 2 / 4;
    border-bottom: 1px solid #a9a9a1;
}

.ruler-y {
    grid-row: 2 / 4;
    border-right: 1px solid #a9a9a1;
}

.ruler-x text,
.ruler-y text {
    stroke: none;
    text-anchor: middle;
}

.ruler-x .unit {
    text-anchor: end;
}

.canvas {
    width: 100%;
    height: 100%;
    background-color: #fff;
    overflow: hidden;
    shape-rendering: crispEdges;
}

.scroll {
    display: flex;
    background-color: #ece9e2;
}

.scroll button {
    width: 13px;
    height: 13px;
    border: 1px solid #c4c1b9;
    background: linear-gradient(#f8f7f4, #dedbd4);
}

.scroll button svg {
    fill: none;
    stroke: #333;
    stroke-width: 2;
}

.vertical {
    flex-direction: column;
}

.track {
    background-color: #f9f7f7;
    border: 1px solid #e4e1da;
}

.thumb {
    display: flex;
    border: 1px solid #bab8b1;
    background: linear-gradient(90deg, #f5f4f0, #d6d3cc);
}

.thumb::before {
    content: "";
    margin: auto;
    width: 7px;
    height: 7px;
    background: repeating-linear-gradient(#a5a39c 0 1px, #fff 1px 2px);
}

.vertical .before {
    flex: 133;
}

.vertical .thumb {
    flex: 203;
}

.vertical .after {
    flex: 168;
}

.horizontal {
    width: 326px;
}

.horizontal button {
    width: 14px;
    height: 14px;
}

.horizontal .before {
    flex: 93;
}

.horizontal .thumb {
    flex: 51;
    background: linear-gradient(#f5f4f0, #d6d3cc);
}

.horizontal .thumb::before {
    background: repeating-linear-gradient(90deg, #a5a39c 0 1px, #fff 1px 2px);
}

.horizontal .after {
    flex: 154;
}

.page-row {
    grid-column: 2 / 4;
    display: flex;
    align-items: stretch;
    border-top: 1px solid #a9a9a1;
}

.pages {
    display: flex;
    align-items: center;
    flex: 1;
}

.pages button {
    width: 14px;
    height: 14px;
    fill: #85837b;
}

.count {
    width: 60px;
    text-align: center;
}

.pages .page-tab {
    width: 90px;
    padding-right: 6px;
    border-left: 1px solid #a9a9a1;
    background-color: #fff;
    clip-path: polygon(0 0, 80px 0, 100% 100%, 0 100%);
}

.grip {
    width: 2px;
    height: 10px;
    background: repeating-linear-gradient(#a5a39c 0 2px, transparent 2px 4px);
}

.pages .grip {
    margin-left: auto;
    margin-right: 4px;
}

.navigator {
    width: 14px;
}

.doc-palette {
    grid-column: 1 / 4;
    display: flex;
    align-items: center;
    gap: 4px;
    padding-left: 4px;
    border-bottom: 1px solid #c9c6be;
    background: linear-gradient(90deg, #ece9e2 60px, #fdfdfd 60px);
}

.dark {
    color: #2a2a3a;
}

.doc-palette p {
    flex: 1;
    margin-right: 16px;
    text-align: center;
    font-style: italic;
    color: #a8a8a6;
}

/* docker */

.docker {
    display: grid;
    grid-template-columns: 1fr 23px;
    grid-template-rows: 24px 1fr;
    border-right: 1px solid #c9c6be;
}

.docker header {
    grid-column: 1 / 3;
    display: flex;
    align-items: center;
    gap: 9px;
    padding: 0 6px;
    border-bottom: 1px solid #b5b3ac;
    background-color: #d4d1c9;
}

.docker h2 {
    flex: 1;
}

.panel {
    display: flex;
    flex-direction: column;
    padding: 8px 8px 0 10px;
    border-right: 1px solid #c9c6be;
}

.panel hr {
    width: 100%;
    height: 1px;
    margin: 0;
    border: none;
    background-color: #cfccc4;
}

.modes {
    display: flex;
    gap: 1px;
    padding-left: 31px;
    margin-bottom: 8px;
}

.modes button {
    width: 25px;
    height: 25px;
    border: 1px solid transparent;
    border-radius: 5px;
}

.row {
    display: flex;
    align-items: center;
    margin-bottom: 3px;
}

.row label {
    display: flex;
    justify-content: flex-end;
    width: 44px;
    margin-right: 4px;
}

.row.first {
    margin: 12px 0 10px;
}

.row .axis {
    color: #3c3c5a;
}

.spin {
    width: 90px;
}

.steps {
    display: flex;
    flex-direction: column;
    gap: 1px;
    margin-right: 1px;
}

.steps button {
    width: 14px;
    height: 9px;
    border: 1px solid #aaa79f;
    border-radius: 2px;
}

.steps button::before {
    content: "";
    border: 4px solid transparent;
    border-bottom-color: #333;
    border-top: none;
}

.steps .down::before {
    border-top: 4px solid #333;
    border-bottom: none;
}

.degree {
    align-self: flex-start;
    margin-left: 5px;
    font-size: 14px;
    color: #3c3c5a;
}

.group {
    display: flex;
    align-items: center;
    gap: 16px;
    margin-bottom: 8px;
    white-space: nowrap;
}

.check {
    display: flex;
    align-items: center;
    gap: 3px;
    margin: 5px 0 10px 48px;
}

.check input {
    appearance: none;
    width: 13px;
    height: 13px;
    border: 1px solid #55554f;
    background: #fff url("data:image/svg+xml,%3Csvg xmlns='http://www.w3.org/2000/svg' width='9' height='9'%3E%3Cpath d='M1 4l3 3 4-6' fill='none' stroke='%23666' stroke-width='2'/%3E%3C/svg%3E") no-repeat center;
}

.anchor {
    width: 40px;
    margin: 0 0 12px 51px;
}

.copies {
    margin: 8px 0;
}

.apply {
    align-self: flex-end;
    width: 87px;
    height: 21px;
    margin-top: 8px;
    border: 1px solid #85837b;
    border-radius: 5px;
    background: linear-gradient(#fff, #f0eee9 50%, #d6d3cc);
}

.docker-tabs {
    display: flex;
    flex-direction: column;
    padding: 3px 2px 0 0;
}

.docker-tabs button {
    flex-direction: column;
    justify-content: flex-start;
    gap: 3px;
    padding: 4px 0;
    border-radius: 0 5px 2px 0;
    background-color: #d0cfcd;
    color: #85837b;
}

.docker-tabs .current {
    gap: 4px;
    height: 134px;
    border: 1px solid #c9c6be;
    border-left: none;
    background-color: #fdfdfc;
    color: #000;
}

.docker-tabs span {
    writing-mode: vertical-rl;
    white-space: nowrap;
}

/* colour palette */

.palette {
    display: flex;
    flex-direction: column;
    align-items: center;
    padding: 3px 0;
    border-left: 1px solid #fff;
}

.palette > button {
    width: 18px;
    height: 17px;
}

.dots {
    width: 10px;
    height: 2px;
    margin-bottom: 3px;
    background: repeating-linear-gradient(90deg, #aaa79f 0 2px, transparent 2px 4px);
}

.faded {
    color: #c6c4be;
}

.palette .step {
    border: 1px solid #bab8b1;
    background: linear-gradient(90deg, #f5f4f0, #dedbd4);
}

.palette .off {
    opacity: 0.4;
}

.palette > .none {
    height: 18px;
}

.swatches {
    display: flex;
    flex-direction: column;
    gap: 1px;
    padding: 1px;
    background-color: #555550;
}

.swatches button {
    width: 16px;
    height: 16px;
}

/* status bar */

.status {
    display: flex;
    padding-bottom: 2px;
    border-top: 1px solid #fff;
    flex: none;
}

.info {
    flex: 1;
    min-width: 0;
    padding-left: 4px;
}

.line {
    display: flex;
    align-items: center;
    gap: 6px;
    height: 21px;
}

.coords {
    display: flex;
    align-items: center;
    gap: 13px;
    width: 357px;
}

.status .monitor {
    margin: 0 54px 0 auto;
}

.colors {
    width: 218px;
    padding-left: 4px;
    background: linear-gradient(#ccc9c1, #ccc9c1) no-repeat 0 4px / 1px 14px;
    margin-left: -4px;
    padding-left: 8px;
}

.colors .line {
    gap: 3px;
}

.colors .line > :first-child {
    margin-right: 3px;
}

.outline {
    width: 18px;
    height: 18px;
    border: 1px solid #77776f;
    background-color: #141515;
}

.user {
    width: 30px;
    height: 34px;
}

.taskbar {
    height: 4px;
    border-top: 2px solid #44557c;
    background: linear-gradient(90deg, #8fa5d0 57%, #55688f 57% 68%, #8fa5d0 68% 84%, #55688f 84%);
    flex: none;
}
```
